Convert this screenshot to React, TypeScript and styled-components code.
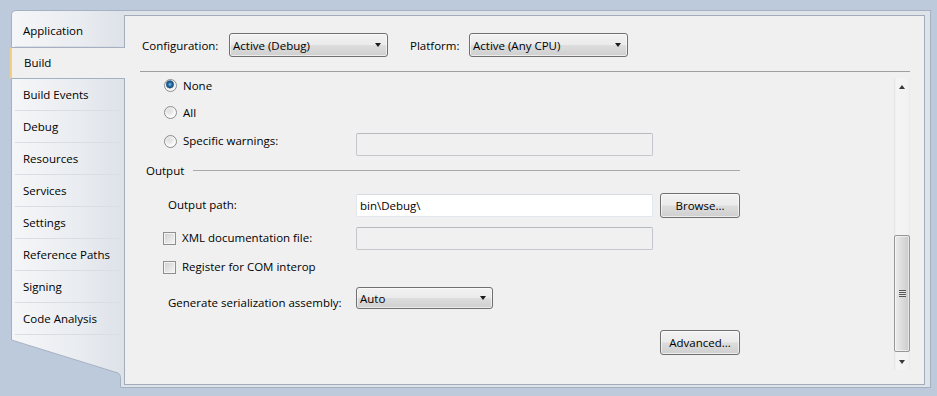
import React from 'react'
import styled, { createGlobalStyle, css } from 'styled-components'

const GlobalStyle = createGlobalStyle`
  html, body {
    margin: 0;
    padding: 0;
    background: #bdcadb;
  }
  body {
    font-family: 'Open Sans', 'Noto Sans', sans-serif;
    font-size: 11.5px;
    color: #000;
  }
`

const FRAME_BORDER = '#a5b1c2'

const Page = styled.div`
  width: 937px;
  height: 396px;
  padding: 10px 0 0 11px;
  box-sizing: border-box;
`

const Frame = styled.div`
  display: flex;
  width: 920px;
  height: 378px;
`

const TabColumn = styled.div`
  display: flex;
  flex-direction: column;
  width: 113px;
  flex: none;
`

const TabList = styled.div`
  display: flex;
  flex-direction: column;
  padding-top: 4px;
  border-top: 1px solid ${FRAME_BORDER};
  border-left: 1px solid ${FRAME_BORDER};
  border-top-left-radius: 5px;
  background: linear-gradient(to right, #f5f6f8, #e9ecf0 60%, #dde2e9);
`

const Tab = styled.div<{ $active?: boolean; $last?: boolean }>`
  position: relative;
  display: flex;
  align-items: center;
  height: 32px;
  box-sizing: border-box;
  padding-left: 11px;
  line-height: 16px;
  white-space: nowrap;

  &::after {
    content: '';
    position: absolute;
    left: 3px;
    right: 5px;
    bottom: 0;
    height: 1px;
    background: #dadee4;
  }

  ${(props) =>
    props.$active &&
    css`
      z-index: 1;
      margin: 0 -1px 0 -2px;
      padding-left: 12px;
      background: #f0f0f0;
      border-top: 1px solid ${FRAME_BORDER};
      border-bottom: 1px solid ${FRAME_BORDER};
      border-left: 2px solid #f2cf83;
      border-radius: 2px 0 0 2px;

      &::after {
        display: none;
      }
    `}
`

const Tail = styled.svg`
  display: block;
  flex: none;
`

const FrameBody = styled.div`
  flex: 1;
  display: flex;
  padding: 4px 5px 2px 0;
  background: #dfe4eb;
  border-top: 1px solid ${FRAME_BORDER};
  border-right: 1px solid ${FRAME_BORDER};
  border-bottom: 1px solid ${FRAME_BORDER};
`

const Panel = styled.div`
  flex: 1;
  display: flex;
  flex-direction: column;
  padding: 17px 14px 0 15px;
  background: #f0f0f0;
  border: 1px solid #a3acb9;
`

const ConfigRow = styled.div`
  display: flex;
  align-items: center;
  height: 24px;
  padding-left: 2px;
`

const ConfigLabel = styled.span<{ $width: number; $gap?: number }>`
  width: ${(props) => props.$width}px;
  margin-left: ${(props) => props.$gap ?? 0}px;
  flex: none;
`

const Divider = styled.div`
  height: 1px;
  margin-top: 14px;
  background: #a0a0a0;
`

const ScrollArea = styled.div`
  display: flex;
  height: 292px;
  margin-top: 6px;
`

const ScrollViewport = styled.div`
  flex: 1;
  overflow: hidden;
`

const ScrollContent = styled.div`
  display: flex;
  flex-direction: column;
  margin-top: -6px;
`

const Row = styled.div<{ $height: number; $top?: number }>`
  display: flex;
  align-items: center;
  height: ${(props) => props.$height}px;
  margin-top: ${(props) => props.$top ?? 0}px;
`

const FormRow = styled.div<{ $height: number; $top?: number; $align?: string }>`
  display: grid;
  grid-template-columns: 209px 297px 80px;
  column-gap: 7px;
  align-items: ${(props) => props.$align ?? 'center'};
  height: ${(props) => props.$height}px;
  margin-top: ${(props) => props.$top ?? 0}px;
`

const OptionLabel = styled.label<{ $indent: number; $pad?: number }>`
  display: flex;
  align-items: center;
  gap: 6px;
  padding-left: ${(props) => props.$indent}px;
  padding-top: ${(props) => props.$pad ?? 0}px;
  line-height: 16px;
  white-space: nowrap;
`

const Radio = styled.span<{ $checked?: boolean }>`
  width: 13px;
  height: 13px;
  box-sizing: border-box;
  border-radius: 50%;
  border: 1px solid #8b8d8f;
  flex: none;
  background: ${(props) =>
    props.$checked
      ? 'radial-gradient(circle at 45% 40%, #8fd0f4 0, #2d77b0 1.6px, #194f7f 3.2px, #6e8aa3 3.9px, transparent 4.4px), radial-gradient(circle, #e2e2e2 0, #f6f6f6 5px)'
      : 'radial-gradient(circle at 40% 35%, #e0e0e0 0, #e9e9e9 3px, #fafafa 5.5px)'};
`

const CheckBox = styled.span`
  width: 13px;
  height: 13px;
  box-sizing: border-box;
  border: 1px solid #8e8f8f;
  flex: none;
  background: linear-gradient(135deg, #cfcfcf, #f7f7f7);
  box-shadow: inset 0 0 0 1px #f4f4f4;
`

const SectionHeader = styled.div`
  display: flex;
  align-items: center;
  width: 600px;
  height: 20px;
  margin-top: 7px;
  padding-left: 6px;
  box-sizing: border-box;
  gap: 9px;

  &::after {
    content: '';
    flex: 1;
    height: 1px;
    background: #a9a9a9;
  }
`

const TextBox = styled.div<{ $disabled?: boolean; $nudge?: number }>`
  height: 23px;
  box-sizing: border-box;
  padding: 0 3px;
  display: flex;
  align-items: center;
  margin-top: ${(props) => props.$nudge ?? 0}px;
  border: 1px solid ${(props) => (props.$disabled ? '#c3c6ca' : '#e2e7ee')};
  border-top-color: ${(props) => (props.$disabled ? '#b7babe' : '#d6dbe2')};
  border-radius: 2px;
  background: ${(props) => (props.$disabled ? '#f0f0f0' : '#fff')};
`

const comboFace = css`
  border: 1px solid #707070;
  border-radius: 3px;
  background: linear-gradient(#f2f2f2 0%, #ebebeb 48%, #dddddd 52%, #cfcfcf 100%);
  box-shadow: inset 0 0 0 1px rgba(255, 255, 255, 0.6);
`

const Combo = styled.div<{ $width: number; $height?: number }>`
  ${comboFace}
  display: flex;
  align-items: center;
  justify-content: space-between;
  width: ${(props) => props.$width}px;
  height: ${(props) => props.$height ?? 24}px;
  box-sizing: border-box;
  padding: 0 6px 0 3px;
  flex: none;
  white-space: nowrap;

  &::after {
    content: '';
    border-left: 3.5px solid transparent;
    border-right: 3.5px solid transparent;
    border-top: 4px solid #1a1a1a;
  }
`

const Button = styled.div<{ $height: number }>`
  ${comboFace}
  display: flex;
  align-items: center;
  justify-content: center;
  width: 80px;
  height: ${(props) => props.$height}px;
  box-sizing: border-box;
`

const Scrollbar = styled.div`
  display: flex;
  flex-direction: column;
  width: 16px;
  flex: none;
  background: linear-gradient(to right, #e3e3e3, #f4f4f4 2px, #f2f2f2 calc(100% - 2px), #e9e9e9);
`

const ArrowButton = styled.div<{ $dir: 'up' | 'down' }>`
  display: flex;
  align-items: center;
  justify-content: center;
  height: 17px;
  flex: none;

  &::after {
    content: '';
    border-left: 3.5px solid transparent;
    border-right: 3.5px solid transparent;
    ${(props) =>
      props.$dir === 'up' ? 'border-bottom: 4px solid #3a3a3a;' : 'border-top: 4px solid #3a3a3a;'}
  }
`

const Track = styled.div`
  flex: 1;
  display: flex;
  flex-direction: column;
`

const Thumb = styled.div`
  display: flex;
  align-items: center;
  justify-content: center;
  height: 117px;
  margin-top: 140px;
  box-sizing: border-box;
  border: 1px solid #979797;
  border-radius: 2px;
  background: linear-gradient(to right, #ececec, #dcdcdc 50%, #cbcbcb);
  box-shadow: inset 0 0 0 1px rgba(255, 255, 255, 0.5);
`

const Grip = styled.div`
  width: 7px;
  height: 7px;
  background: repeating-linear-gradient(#555 0 1px, #e6e6e6 1px 2px);
`

const tabs = [
  'Application',
  'Build',
  'Build Events',
  'Debug',
  'Resources',
  'Services',
  'Settings',
  'Reference Paths',
  'Signing',
  'Code Analysis',
]

export default function App() {
  return (
    <Page>
      <GlobalStyle />
      <Frame>
        <TabColumn>
          <TabList>
            {tabs.map((t) => (
              <Tab key={t} $active={t === 'Build'}>
                {t}
              </Tab>
            ))}
          </TabList>
          <Tail width="113" height="53" viewBox="0 0 113 53">
            <defs>
              <linearGradient id="tailFill" x1="0" x2="1" y1="0" y2="0">
                <stop offset="0" stopColor="#f5f6f8" />
                <stop offset="0.6" stopColor="#e9ecf0" />
                <stop offset="1" stopColor="#dde2e9" />
              </linearGradient>
            </defs>
            <path d="M0 0 L0 5 L107 38 Q109 39 109 43 L109 53 L113 53 L113 0 Z" fill="url(#tailFill)" />
            <path
              d="M0.5 0 L0.5 5 L107 38 Q109.5 39 109.5 43 L109.5 52.5 L113 52.5"
              fill="none"
              stroke={FRAME_BORDER}
              strokeWidth="1"
            />
          </Tail>
        </TabColumn>
        <FrameBody>
          <Panel>
            <ConfigRow>
              <ConfigLabel $width={87}>Configuration:</ConfigLabel>
              <Combo $width={159}>Active (Debug)</Combo>
              <ConfigLabel $width={59} $gap={22}>
                Platform:
              </ConfigLabel>
              <Combo $width={159}>Active (Any CPU)</Combo>
            </ConfigRow>
            <Divider />
            <ScrollArea>
              <ScrollViewport>
                <ScrollContent>
                  <Row $height={27}>
                    <OptionLabel $indent={24}>
                      <Radio $checked />
                      None
                    </OptionLabel>
                  </Row>
                  <Row $height={27}>
                    <OptionLabel $indent={24}>
                      <Radio />
                      All
                    </OptionLabel>
                  </Row>
                  <FormRow $height={27}>
                    <OptionLabel $indent={24}>
                      <Radio />
                      Specific warnings:
                    </OptionLabel>
                    <TextBox $disabled $nudge={7} />
                  </FormRow>
                  <SectionHeader>Output</SectionHeader>
                  <FormRow $height={26} $top={12}>
                    <OptionLabel $indent={28}>Output path:</OptionLabel>
                    <TextBox>bin\Debug\</TextBox>
                    <Button $height={25}>Browse...</Button>
                  </FormRow>
                  <FormRow $height={24} $top={8}>
                    <OptionLabel $indent={23}>
                      <CheckBox />
                      XML documentation file:
                    </OptionLabel>
                    <TextBox $disabled />
                  </FormRow>
                  <Row $height={24} $top={5}>
                    <OptionLabel $indent={23}>
                      <CheckBox />
                      Register for COM interop
                    </OptionLabel>
                  </Row>
                  <FormRow $height={22} $top={8} $align="start">
                    <OptionLabel $indent={28} $pad={8}>
                      Generate serialization assembly:
                    </OptionLabel>
                    <Combo $width={137} $height={22}>
                      Auto
                    </Combo>
                  </FormRow>
                  <FormRow $height={25} $top={21}>
                    <span />
                    <span />
                    <Button $height={25}>Advanced...</Button>
                  </FormRow>
                </ScrollContent>
              </ScrollViewport>
              <Scrollbar>
                <ArrowButton $dir="up" />
                <Track>
                  <Thumb>
                    <Grip />
                  </Thumb>
                </Track>
                <ArrowButton $dir="down" />
              </Scrollbar>
            </ScrollArea>
          </Panel>
        </FrameBody>
      </Frame>
    </Page>
  )
}
